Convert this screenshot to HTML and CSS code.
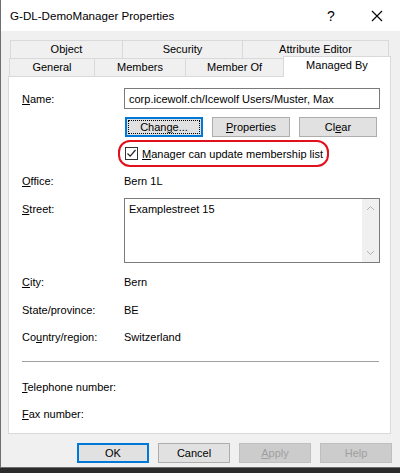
FILE: index.html
```html
<!DOCTYPE html>
<html lang="en">
<head>
  <meta charset="UTF-8">
  <title>G-DL-DemoManager Properties</title>
  <link rel="stylesheet" href="styles.css">
</head>
<body>
<div class="window">
  <div class="titlebar">
    <span class="title">G-DL-DemoManager Properties</span>
    <span class="help-btn">?</span>
    <span class="close-btn">
      <svg width="12" height="12" viewBox="0 0 12 12"><path d="M1 1 L11 11 M11 1 L1 11" stroke="#000" stroke-width="1.1" fill="none"/></svg>
    </span>
  </div>

  <div class="tabs">
    <div class="tab-row">
      <div class="tab w112">Object</div>
      <div class="tab w120">Security</div>
      <div class="tab w147">Attribute Editor</div>
    </div>
    <div class="tab-row">
      <div class="tab w84">General</div>
      <div class="tab w91">Members</div>
      <div class="tab w98">Member Of</div>
      <div class="tab active">Managed By</div>
    </div>
  </div>

  <div class="panel">
    <div class="row row-name">
      <label><u>N</u>ame:</label>
      <div class="field">corp.icewolf.ch/Icewolf Users/Muster, Max</div>
    </div>

    <div class="row row-buttons">
      <span></span>
      <div class="btn-group">
        <button class="btn focus"><span class="focus-ring">Chan<u>g</u>e...</span></button>
        <button class="btn"><u>P</u>roperties</button>
        <button class="btn">Cl<u>e</u>ar</button>
      </div>
    </div>

    <div class="row row-check">
      <span></span>
      <div class="highlight">
        <span class="checkbox">
          <svg width="11" height="11" viewBox="0 0 11 11"><path d="M1.5 5.5 L4.2 8.2 L9.5 2" stroke="#222" stroke-width="1.2" fill="none"/></svg>
        </span>
        <span><u>M</u>anager can update membership list</span>
      </div>
    </div>

    <div class="row row-office">
      <label><u>O</u>ffice:</label>
      <span>Bern 1L</span>
    </div>

    <div class="row row-street">
      <label><u>S</u>treet:</label>
      <div class="field area">
        <span class="area-text">Examplestreet 15</span>
        <div class="scrollbar">
          <svg width="9" height="6" viewBox="0 0 9 6"><path d="M1 5 L4.5 1.5 L8 5" stroke="#b0b0b0" fill="none"/></svg>
          <svg width="9" height="6" viewBox="0 0 9 6"><path d="M1 1 L4.5 4.5 L8 1" stroke="#b0b0b0" fill="none"/></svg>
        </div>
      </div>
    </div>

    <div class="row row-info city">
      <label><u>C</u>ity:</label>
      <span>Bern</span>
    </div>
    <div class="row row-info">
      <label>State/province:</label>
      <span>BE</span>
    </div>
    <div class="row row-info">
      <label>Co<u>u</u>ntry/region:</label>
      <span>Switzerland</span>
    </div>

    <div class="separator"></div>

    <div class="row row-info phone">
      <label><u>T</u>elephone number:</label>
      <span></span>
    </div>
    <div class="row row-info">
      <label><u>F</u>ax number:</label>
      <span></span>
    </div>
  </div>

  <div class="footer">
    <button class="btn wide default">OK</button>
    <button class="btn wide">Cancel</button>
    <button class="btn wide disabled"><u>A</u>pply</button>
    <button class="btn wide disabled">Help</button>
  </div>
</div>
</body>
</html>
```

FILE: styles.css
```css
/* Reset */
* {
  margin: 0;
  padding: 0;
  box-sizing: border-box;
}

body {
  width: 400px;
  height: 473px;
  overflow: hidden;
  background-color: #2c2c2c;
  font-family: "Liberation Sans", Arial, sans-serif;
  font-size: 11px;
  color: #000;
}

/* Dialog window */
.window {
  width: 400px;
  height: 468px;
  background-color: #f0f0f0;
  border-left: 1px solid #6f6f6f;
  border-bottom: 1px solid #6f6f6f;
}

.titlebar {
  height: 31px;
  background-color: #fff;
  display: flex;
  align-items: center;
  padding-left: 9px;
}

.title {
  flex: 1;
  font-size: 11.6px;
}

.help-btn {
  width: 46px;
  text-align: center;
  font-size: 14px;
}

.close-btn {
  width: 46px;
  display: flex;
  justify-content: center;
}

/* Tabs */
.tabs {
  margin-top: 9px;
  padding-left: 8px;
}

.tab-row {
  display: flex;
  height: 18px;
  align-items: flex-end;
}

.tab {
  height: 18px;
  border: 1px solid #d9d9d9;
  border-right: none;
  border-bottom: none;
  background-color: #f0f0f0;
  display: flex;
  align-items: center;
  justify-content: center;
  line-height: 1;
  white-space: nowrap;
}

.tab-row .tab:last-child {
  border-right: 1px solid #d9d9d9;
}

.w112 { width: 112px; margin-left: 1px; }
.w120 { width: 120px; }
.w147 { width: 147px; }
.w84 { width: 85px; }
.w91 { width: 91px; }
.w98 { width: 98px; }

.tab.active {
  width: 108px;
  height: 21px;
  background-color: #fff;
  margin-bottom: -1px;
  position: relative;
  align-items: flex-start;
  padding-top: 3px;
  z-index: 1;
}

/* Tab page */
.panel {
  margin-left: 7px;
  width: 383px;
  height: 358px;
  background-color: #fff;
  border: 1px solid #d9d9d9;
  padding: 11px 10px 0 13px;
}

.row {
  display: grid;
  grid-template-columns: 102px 1fr;
  align-items: center;
  white-space: nowrap;
}

.row-name {
  height: 21px;
}

.field {
  height: 21px;
  border: 1px solid #7a7a7a;
  padding: 0 4px;
  display: flex;
  align-items: center;
}

.row-buttons {
  margin-top: 8px;
  height: 20px;
}

.btn-group {
  display: flex;
  gap: 9px;
  padding-left: 1px;
}

.btn {
  width: 78px;
  height: 20px;
  background-color: #e1e1e1;
  border: 1px solid #adadad;
  font-family: inherit;
  font-size: 11px;
  color: #000;
  display: flex;
  align-items: center;
  justify-content: center;
}

.btn.focus {
  border: 2px solid #0078d7;
  padding: 1px;
}

.focus-ring {
  width: 100%;
  height: 100%;
  border: 1px dotted #000;
  display: flex;
  align-items: center;
  justify-content: center;
}

.row-check {
  margin-top: 3px;
  height: 27px;
}

.highlight {
  margin-left: -6px;
  width: 211px;
  height: 27px;
  border: 2px solid #e0101c;
  border-radius: 12px;
  display: flex;
  align-items: center;
  gap: 4px;
  padding-left: 5px;
}

.checkbox {
  width: 13px;
  height: 13px;
  border: 1px solid #333;
  background-color: #fff;
  display: flex;
  align-items: center;
  justify-content: center;
}

.row-office {
  height: 28px;
}

.row-street {
  margin-top: 3px;
  align-items: start;
}

.row-street label {
  padding-top: 5px;
}

.field.area {
  height: 65px;
  align-items: stretch;
  padding: 0 0 0 4px;
}

.area-text {
  flex: 1;
  padding-top: 4px;
}

.scrollbar {
  width: 17px;
  background-color: #f0f0f0;
  display: flex;
  flex-direction: column;
  justify-content: space-between;
  align-items: center;
  padding: 6px 0;
}

.row-info {
  height: 27px;
}

.row-info.city {
  margin-top: 5px;
  height: 28px;
}

.separator {
  margin-top: 11px;
  margin-right: 1px;
  height: 1px;
  background-color: #a0a0a0;
}

.row-info.phone {
  margin-top: 11px;
}

/* Dialog buttons */
.footer {
  display: flex;
  justify-content: flex-end;
  gap: 9px;
  padding-right: 8px;
  margin-top: 9px;
}

.btn.wide {
  width: 72px;
  height: 20px;
}

.btn.default {
  border: 2px solid #0078d7;
}

.btn.disabled {
  background-color: #cccccc;
  border-color: #bfbfbf;
  color: #a0a0a0;
}
```
